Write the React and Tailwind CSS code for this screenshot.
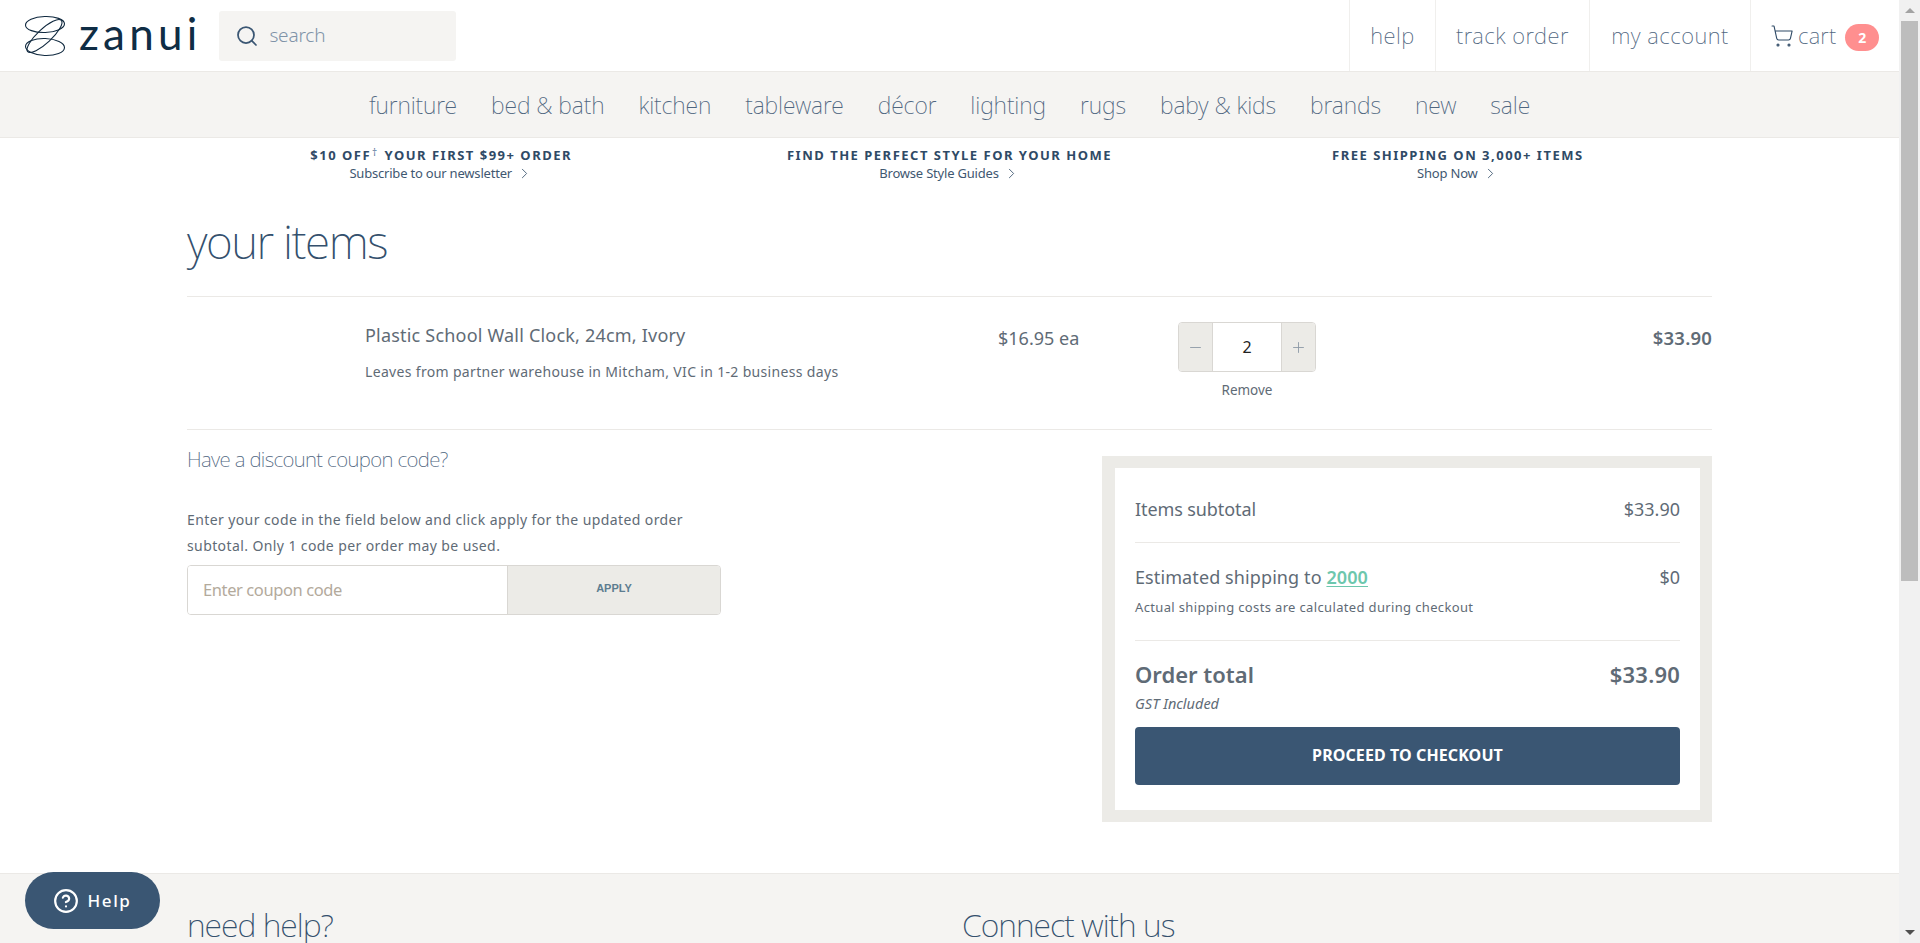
import React from "react";
import { Search, ShoppingCart, ChevronRight, CircleHelp, Minus, Plus } from "lucide-react";

const FONT = "font-['Noto_Sans','Open_Sans',sans-serif]";
const navItems = ["furniture", "bed & bath", "kitchen", "tableware", "décor", "lighting", "rugs", "baby & kids", "brands", "new", "sale"];

function Logo() {
  return (
    <svg width="42" height="42" viewBox="0 0 42 42" fill="none" stroke="#10293f" strokeWidth="1.1" className="shrink-0">
      <ellipse cx="21" cy="9.5" rx="19.5" ry="8" transform="rotate(-2 21 9.5)" />
      <ellipse cx="21" cy="32" rx="19.5" ry="8.5" transform="rotate(2 21 32)" />
      <ellipse cx="20.5" cy="21" rx="23" ry="7" transform="rotate(-43 20.5 21)" />
    </svg>
  );
}

function Promo({ title, sup, rest, sub }) {
  return (
    <div className="flex flex-col items-center">
      <div className="text-[13px] leading-[18px] font-bold tracking-[1.5px] text-[#2f4a66] whitespace-nowrap">
        {title}
        {sup && <sup className="text-[10px] font-normal text-[#5c7da0] -top-[4px] relative align-baseline mx-[1px]">†</sup>}
        {rest}
      </div>
      <div className="flex items-center gap-[4px] text-[13px] leading-[18px] tracking-[-0.2px] text-[#3f5871] whitespace-nowrap">
        {sub}
        <ChevronRight size={17} strokeWidth={1.25} />
      </div>
    </div>
  );
}

function Row({ left, right, leftClass = "", rightClass = "" }) {
  return (
    <div className="flex justify-between items-center">
      <div className={leftClass}>{left}</div>
      <div className={rightClass}>{right}</div>
    </div>
  );
}

export default function App() {
  return (
    <div className={`${FONT} relative flex h-[943px] w-[1920px] overflow-hidden bg-white`}>
      <div className="flex-1 min-w-0 flex flex-col">
        <header className="flex h-[72px] items-stretch justify-between border-b border-[#ebe9e6] bg-white">
          <div className="flex items-center pl-[24px]">
            <Logo />
            <span className="ml-[13px] font-['Lato',sans-serif] text-[44px] leading-none tracking-[4.2px] text-[#0f2d45] -mt-[5px]">zanui</span>
            <div className="ml-[18px] flex h-[50px] w-[237px] items-center rounded-[3px] bg-[#f5f4f2] pl-[16px]">
              <Search size={24} strokeWidth={1.75} className="text-[#3a5673]" />
              <span className="ml-[10px] text-[19px] font-light tracking-[-0.2px] text-[#7f93a8]">search</span>
            </div>
          </div>
          <div className="flex items-stretch text-[22px] font-extralight tracking-[0.5px] text-[#4f6680]">
            <div className="flex w-[86px] items-center justify-center border-l border-[#f0efed]">help</div>
            <div className="flex w-[154px] items-center justify-center border-l border-[#f0efed]">track order</div>
            <div className="flex w-[161px] items-center justify-center border-l border-[#f0efed]">my account</div>
            <div className="flex w-[149px] items-center pl-[19px] border-l border-[#f0efed]">
              <ShoppingCart size={24} strokeWidth={1.1} className="text-[#2f4a66]" />
              <span className="ml-[4px] tracking-[0.2px]">cart</span>
              <span className="ml-[9px] mt-[3px] flex h-[27px] w-[34px] items-center justify-center rounded-full bg-[#ff8f8f] text-[14px] font-bold tracking-normal text-white">2</span>
            </div>
          </div>
        </header>

        <nav className="flex h-[66px] items-center justify-center gap-[34px] border-b border-[#ebe9e6] bg-[#f5f4f2] pt-[1px] text-[23px] font-extralight tracking-[-0.1px] text-[#4f6680]">
          {navItems.map((t) => <span key={t} className="whitespace-nowrap">{t}</span>)}
        </nav>

        <main className="flex-1 px-[187px]">
          <div className="grid grid-cols-3 pt-[8px]">
            <Promo title="$10 OFF" sup rest=" YOUR FIRST $99+ ORDER" sub="Subscribe to our newsletter" />
            <Promo title="FIND THE PERFECT STYLE FOR YOUR HOME" sub="Browse Style Guides" />
            <Promo title="FREE SHIPPING ON 3,000+ ITEMS" sub="Shop Now" />
          </div>

          <h1 className="mt-[29px] h-[86px] border-b border-[#ebe9e6] text-[46px] leading-[60px] font-extralight tracking-[-1.5px] text-[#34506d]">your items</h1>

          <div className="grid h-[133px] grid-cols-[178px_633px_180px_138px_1fr] border-b border-[#ebe9e6] pt-[25px] text-[#5f6b76]">
            <div />
            <div>
              <div className="text-[18px] leading-[26px] tracking-[0.2px]">Plastic School Wall Clock, 24cm, Ivory</div>
              <div className="mt-[14px] text-[14px] leading-[20px] tracking-[0.33px]">Leaves from partner warehouse in Mitcham, VIC in 1-2 business days</div>
            </div>
            <div className="pt-[3px] text-[18px] leading-[26px]">$16.95 ea</div>
            <div>
              <div className="flex h-[50px] w-[138px] overflow-hidden rounded-[4px] border border-[#d9d7d3]">
                <div className="flex w-[33px] items-center justify-center bg-[#ecebe7] text-[#8b98a5]"><Minus size={17} strokeWidth={1.25} /></div>
                <div className="flex flex-1 items-center justify-center border-x border-[#d9d7d3] bg-white text-[16px] text-[#222]">2</div>
                <div className="flex w-[33px] items-center justify-center bg-[#ecebe7] text-[#8b98a5]"><Plus size={17} strokeWidth={1.25} /></div>
              </div>
              <div className="mt-[8px] text-center text-[13.5px] leading-[20px] text-[#5f6b76]">Remove</div>
            </div>
            <div className="pt-[3px] text-right text-[18.5px] leading-[26px] font-semibold tracking-[0.2px] text-[#5f6b76]">$33.90</div>
          </div>

          <div className="mt-[26px] flex items-start justify-between">
            <div className="-mt-[12px] w-[534px]">
              <h2 className="text-[20.5px] leading-[30px] font-extralight tracking-[-0.65px] text-[#4f6680]">Have a discount coupon code?</h2>
              <p className="mt-[33px] text-[14px] leading-[26px] tracking-[0.4px] text-[#5f6b76] whitespace-nowrap">
                Enter your code in the field below and click apply for the updated order<br />subtotal. Only 1 code per order may be used.
              </p>
              <div className="mt-[6px] flex h-[50px] overflow-hidden rounded-[4px] border border-[#d9d7d3]">
                <div className="flex w-[320px] items-center border-r border-[#d9d7d3] bg-white pl-[15px] text-[16.5px] tracking-[-0.4px] text-[#b3aa9c]">Enter coupon code</div>
                <div className="flex flex-1 items-center justify-center bg-[#ecebe7] pb-[3px] font-['Liberation_Sans',sans-serif] text-[11px] font-bold text-[#5d7d90]">APPLY</div>
              </div>
            </div>

            <div className="w-[610px] border-y-[12px] border-r-[12px] border-l-[13px] border-[#ecebe7] bg-white px-[20px] text-[#5f6b76]">
              <div className="h-[75px] border-b border-[#ebe9e6] pt-[28px]">
                <Row left="Items subtotal" right="$33.90" leftClass="text-[18px] leading-[26px] tracking-[-0.1px]" rightClass="text-[18px] leading-[26px]" />
              </div>
              <div className="h-[98px] border-b border-[#ebe9e6] pt-[21px]">
                <Row
                  left={<>Estimated shipping to <span className="font-semibold text-[#6dc7ad] underline underline-offset-2">2000</span></>}
                  right="$0"
                  leftClass="text-[18px] leading-[26px] tracking-[0.1px]"
                  rightClass="text-[18px] leading-[26px]"
                />
                <div className="mt-[8px] text-[13px] leading-[18px] tracking-[0.35px]">Actual shipping costs are calculated during checkout</div>
              </div>
              <div className="pt-[17px] pb-[25px]">
                <Row left="Order total" right="$33.90" leftClass="text-[22px] leading-[32px] font-semibold" rightClass="text-[22px] leading-[32px] font-semibold tracking-[0.2px]" />
                <div className="mt-[4px] text-[14.5px] leading-[18px] italic">GST Included</div>
                <div className="mt-[15px] flex h-[58px] items-center justify-center rounded-[4px] bg-[#3a5673] pb-[2px] text-[16px] font-bold tracking-[0.1px] text-white">PROCEED TO CHECKOUT</div>
              </div>
            </div>
          </div>
        </main>

        <footer className="flex h-[70px] shrink-0 border-t border-[#ebe9e6] bg-[#f5f4f2] pl-[187px] pt-[29px] text-[32px] leading-[44px] font-extralight tracking-[-1px] text-[#34506d]">
          <div className="w-[775px]">need help?</div>
          <div>Connect with us</div>
        </footer>
      </div>

      <div className="flex w-[21px] shrink-0 flex-col items-center bg-[#f1f1f1]">
        <div className="flex h-[21px] items-center justify-center">
          <span className="h-0 w-0 border-x-[5px] border-b-[5px] border-x-transparent border-b-[#a3a3a3]" />
        </div>
        <div className="h-[560px] w-[17px] bg-[#bdbdbd]" />
        <div className="flex-1" />
        <div className="flex h-[21px] items-center justify-center">
          <span className="h-0 w-0 border-x-[5px] border-t-[5px] border-x-transparent border-t-[#505050]" />
        </div>
      </div>

      <div className="absolute bottom-[14px] left-[25px] flex h-[57px] w-[135px] items-center justify-center gap-[8px] rounded-full bg-[#3a5673] text-[17px] font-medium tracking-[1.6px] text-white">
        <CircleHelp size={26} strokeWidth={2} />
        Help
      </div>
    </div>
  );
}
